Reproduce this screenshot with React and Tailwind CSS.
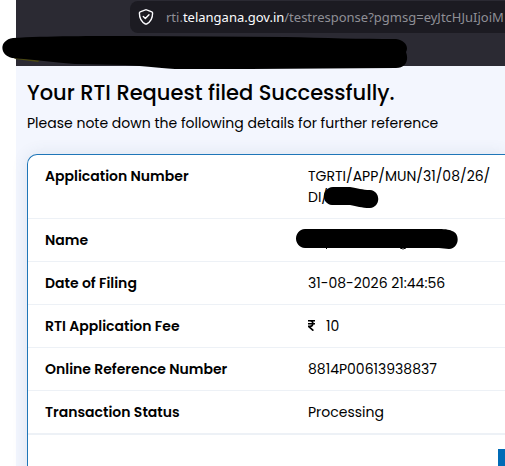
const details = [
  { label: "Application Number", value: "TGRTI/APP/MUN/31/08/26/ DI/", mark: "number" },
  { label: "Name", value: "", mark: "name" },
  { label: "Date of Filing", value: "31-08-2026 21:44:56" },
  { label: "RTI Application Fee", value: "10", currency: true },
  { label: "Online Reference Number", value: "8814P00613938837" },
  { label: "Transaction Status", value: "Processing" },
];

function ShieldIcon() {
  return (
    <svg className="block h-4 w-4" viewBox="0 0 16 16" fill="none" stroke="#fbfbfe" strokeWidth="1.4" strokeLinecap="round" strokeLinejoin="round">
      <path d="M7.4 0.9 Q8 0.6 8.6 0.9 L13.8 2.9 Q14.6 3.2 14.6 4.1 C14.6 9.2 12.4 13.2 8.6 15 Q8 15.3 7.4 15 C3.6 13.2 1.4 9.2 1.4 4.1 Q1.4 3.2 2.2 2.9 Z" />
      <path d="M5.3 7.6 L7.3 9.6 L11 5.7" />
    </svg>
  );
}

function BrowserBar() {
  return (
    <header className="relative h-[66px] bg-[#2b2a33] pt-px pl-[114px]">
      <div className="flex h-8 items-center overflow-hidden rounded-l-lg bg-[#1c1b22] pl-2">
        <button type="button" aria-label="Site information" className="shrink-0">
          <ShieldIcon />
        </button>
        <div className="ml-3 font-['Noto_Sans',sans-serif] text-[13px] leading-5 whitespace-nowrap text-[#8f8f96]">
          rti.<span className="text-[#fbfbfe]">telangana.gov.in</span>/testresponse?pgmsg=eyJtcHJuIjoiM
        </div>
      </div>
      {/* Marker stroke over the bookmarks */}
      <svg className="absolute top-[34px] -left-4 h-9 w-[410px]" viewBox="0 34 410 36" aria-hidden="true">
        <path d="M14 58 L40 60 L38 62 L15 59 Z" fill="#4a4712" />
        <path d="M13 38 C45 36 95 36 130 36 L285 37 C325 38 360 39 396 39 C405 40 409 47 406 52 C409 60 406 68 396 68 L250 69 L175 69 C155 68 148 66 125 65 L75 64 C50 62 38 60 12 58 C-1 55 -1 40 13 38 Z" fill="#000" />
      </svg>
    </header>
  );
}

function RupeeIcon() {
  return (
    <svg className="mr-[11px] inline-block h-[11px] w-[7px] align-baseline" viewBox="0 0 7 11" fill="none" stroke="#000" strokeWidth="1.6" aria-label="Rupees">
      <path d="M0 0.8 H7 M0 3.7 H7 M0 0.8 H2 C5.8 0.8 5.8 6.4 2 6.4 H0.6 L5.4 10.7" />
    </svg>
  );
}

function NumberMark() {
  return (
    <svg className="absolute top-[31px] left-[15px] h-[23px] w-14" viewBox="0 0 56 23" aria-hidden="true">
      <path d="M10 1 L27 1 C35 2 39 4 47 4 C58 5 58 21 47 22 C38 22 34 20 27 19 L9 19 C-2 18 -2 2 10 1 Z" />
    </svg>
  );
}

function NameMark() {
  return (
    <svg className="absolute top-[9px] -left-[13px] h-[22px] w-[164px]" viewBox="0 0 164 22" aria-hidden="true">
      <path d="M10 1 H144 C151 1 156 2 157 3 C165 5 165 20 154 21 L144 20 H10 C-2 19 -2 2 10 1 Z" />
      <path d="M33 19 L31 21 M105 20 Q108 22 111 20" fill="none" stroke="#000" />
    </svg>
  );
}

function DetailRow({ item }) {
  return (
    <tr className="border-b border-[#edf1f6] last:border-b-2">
      <th scope="row" className="w-[280px] pt-[11px] pb-[10px] pl-[17px] text-left align-top font-semibold">
        {item.label}
      </th>
      <td className="relative pt-[11px] pr-2 pb-[10px] align-top">
        {item.currency && <RupeeIcon />}
        {item.value}
        {item.mark === "number" && <NumberMark />}
        {item.mark === "name" && <NameMark />}
      </td>
    </tr>
  );
}

function App() {
  return (
    <div className="min-h-screen overflow-hidden bg-white pl-4 font-[Poppins,Inter,sans-serif] text-[14px] leading-[21px] text-black">
      <BrowserBar />
      <main className="min-h-[400px] bg-[#f3f6fe] pt-3 pl-[11px]">
        <h1 className="text-[21px] leading-[30px] font-medium">Your RTI Request filed Successfully.</h1>
        <p className="mt-[5px]">Please note down the following details for further reference</p>
        <section className="mt-5 min-h-[312px] overflow-hidden rounded-tl-[10px] border-t border-l border-[#1f76b8] bg-white shadow-[0_0_16px_rgba(60,90,120,0.12)]">
          <table className="w-full border-collapse">
            <tbody>
              {details.map((item) => (
                <DetailRow key={item.label} item={item} />
              ))}
            </tbody>
          </table>
          <div className="mt-[14px] flex justify-end">
            <button type="button" aria-label="Print" className="-mr-[89px] h-9 w-24 shrink-0 bg-[#006bb6]" />
          </div>
        </section>
      </main>
    </div>
  );
}

export default App;
